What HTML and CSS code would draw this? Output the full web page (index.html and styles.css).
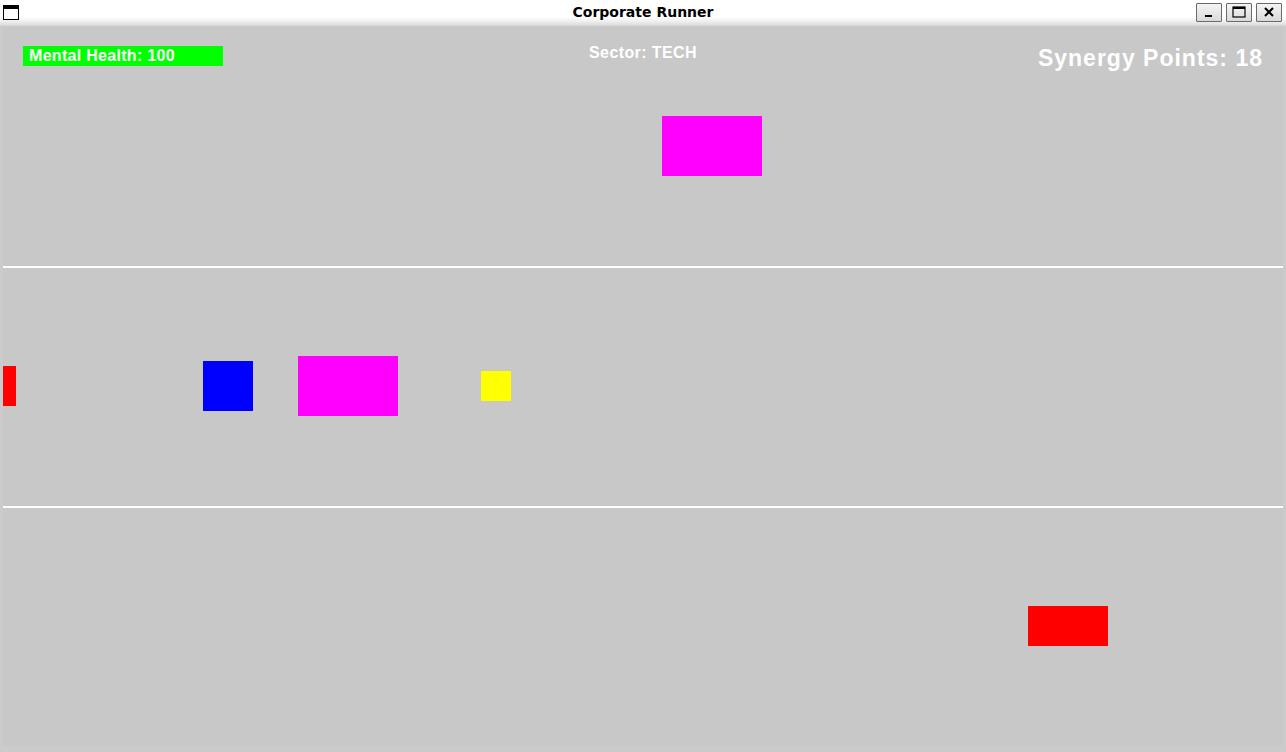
FILE: index.html
```html
<!DOCTYPE html>
<html lang="en">
<head>
  <meta charset="UTF-8" />
  <meta name="viewport" content="width=device-width, initial-scale=1.0" />
  <title>Corporate Runner</title>
  <link rel="stylesheet" href="styles.css">
</head>
<body>

  <div class="window">

    <!-- title bar -->
    <div class="titlebar">
      <svg class="win-icon" width="16" height="16" viewBox="0 0 16 16">
        <rect x="0.5" y="0.5" width="15" height="14" fill="#fff" stroke="#000" />
        <rect x="0" y="0" width="16" height="4" fill="#000" />
      </svg>
      <span class="title">Corporate Runner</span>
      <div class="win-buttons">
        <button class="win-btn">
          <svg width="12" height="12" viewBox="0 0 12 12"><rect x="2" y="9" width="7" height="2" fill="#000" /></svg>
        </button>
        <button class="win-btn">
          <svg width="14" height="12" viewBox="0 0 14 12"><rect x="1" y="1" width="12" height="10" fill="none" stroke="#000" stroke-width="1.2" /><rect x="1" y="1" width="12" height="2" fill="#000" /></svg>
        </button>
        <button class="win-btn">
          <svg width="12" height="12" viewBox="0 0 12 12"><path d="M2 2 L10 10 M10 2 L2 10" stroke="#000" stroke-width="2" /></svg>
        </button>
      </div>
    </div>

    <div class="frame">
      <div class="canvas">

        <!-- lanes -->
        <div class="lane"></div>
        <div class="lane lane-split"></div>
        <div class="lane lane-split"></div>

        <!-- hud -->
        <div class="hud">
          <div class="hud-left">
            <div class="health-bar">Mental Health: 100</div>
          </div>
          <div class="sector">Sector: TECH</div>
          <div class="score">Synergy Points: 18</div>
        </div>

        <!-- things in the lanes -->
        <div class="thing obstacle-pink" style="left: 659px; top: 90px;"></div>
        <div class="thing player" style="left: 200px; top: 335px;"></div>
        <div class="thing obstacle-pink" style="left: 295px; top: 330px;"></div>
        <div class="thing coin" style="left: 478px; top: 345px;"></div>
        <div class="thing obstacle-red" style="left: -67px; top: 340px;"></div>
        <div class="thing obstacle-red" style="left: 1025px; top: 580px;"></div>

      </div>
    </div>
  </div>

</body>
</html>
```

FILE: styles.css
```css
body {
  margin: 0;
  font-family: "Liberation Sans", Arial, sans-serif;
  background-color: #cbcbcb;
}


.window {
  width: 1286px;
  height: 752px;
  display: flex;
  flex-direction: column;
  overflow: hidden;
}


.titlebar {
  height: 26px;
  flex-shrink: 0;
  display: flex;
  align-items: center;
  position: relative;
  background: linear-gradient(#ffffff 0px, #ffffff 17px, #ececec 22px, #d6d6d6 26px);
}

.win-icon {
  margin-left: 3px;
  margin-top: -1px;
}

.title {
  position: absolute;
  left: 0;
  right: 0;
  top: 4px;
  text-align: center;
  font-family: "DejaVu Sans", sans-serif;
  font-weight: bold;
  font-size: 14px;
  color: #000;
  pointer-events: none;
}

.win-buttons {
  margin-left: auto;
  margin-right: 4px;
  margin-top: -2px;
  display: flex;
  gap: 4px;
}

.win-btn {
  width: 26px;
  height: 19px;
  padding: 0;
  border: 1px solid #6a6a6a;
  border-radius: 1px;
  background: linear-gradient(#f4f4f4, #dadada);
  display: flex;
  align-items: center;
  justify-content: center;
}


.frame {
  flex: 1;
  padding: 0 3px;
  background-color: #cbcbcb;
}


.canvas {
  width: 1280px;
  height: 720px;
  position: relative;
  overflow: hidden;
  background-color: #c8c8c8;
}


.lane {
  height: 240px;
  box-sizing: border-box;
}

.lane-split {
  border-top: 2px solid #ffffff;
}


.hud {
  position: absolute;
  top: 20px;
  left: 20px;
  right: 20px;
  display: grid;
  grid-template-columns: 1fr auto 1fr;
  align-items: start;
  color: #ffffff;
  font-weight: bold;
}

.health-bar {
  width: 200px;
  height: 20px;
  box-sizing: border-box;
  padding-left: 6px;
  background-color: #00ff00;
  font-size: 16px;
  line-height: 20px;
  letter-spacing: 0.3px;
}

.sector {
  font-size: 16px;
  line-height: 16px;
  margin-top: -1px;
  letter-spacing: 0.4px;
}

.score {
  text-align: right;
  font-size: 23px;
  line-height: 23px;
  margin-top: 1px;
  letter-spacing: 1px;
}


.thing {
  position: absolute;
}

.obstacle-pink {
  width: 100px;
  height: 60px;
  background-color: #ff00ff;
}

.obstacle-red {
  width: 80px;
  height: 40px;
  background-color: #ff0000;
}

.player {
  width: 50px;
  height: 50px;
  background-color: #0000ff;
}

.coin {
  width: 30px;
  height: 30px;
  background-color: #ffff00;
}
```
